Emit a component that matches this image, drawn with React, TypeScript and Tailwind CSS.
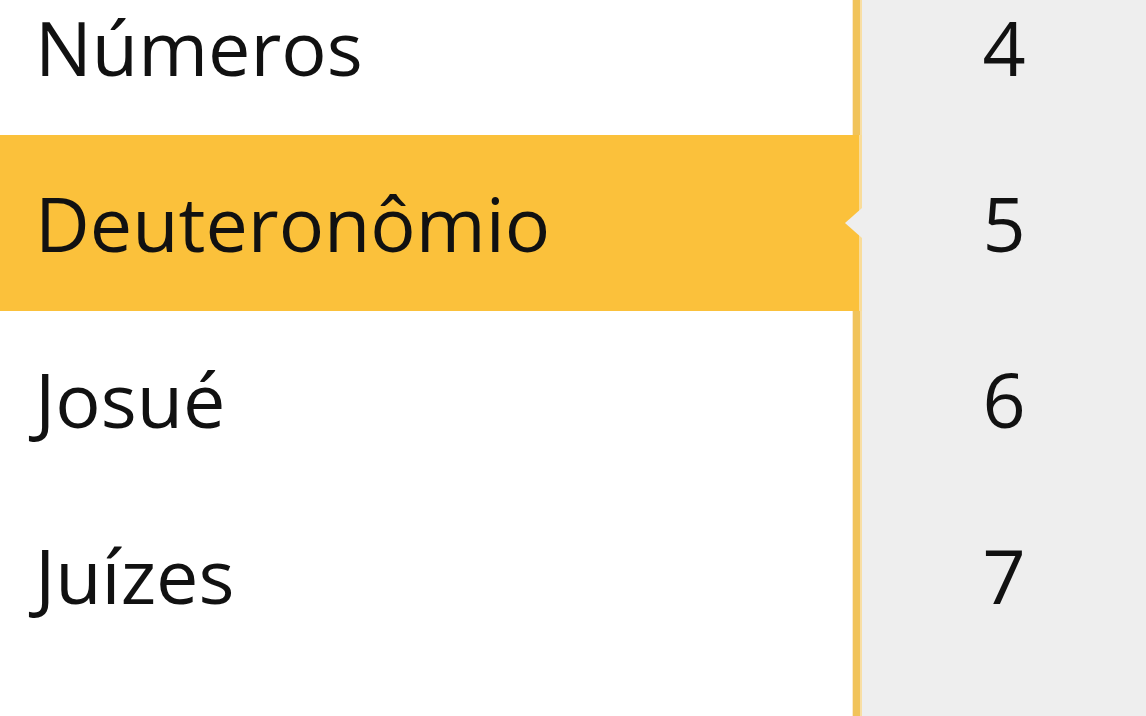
import React from "react";

const rows = [
  { name: "Levítico", n: "3" },
  { name: "Números", n: "4" },
  { name: "Deuteronômio", n: "5", selected: true },
  { name: "Josué", n: "6" },
  { name: "Juízes", n: "7" },
  { name: "Rute", n: "8" },
];

export default function App() {
  return (
    <div
      className="w-[1146px] h-[716px] overflow-hidden bg-white text-[#111111]"
      style={{ fontFamily: '"Open Sans", "Noto Sans", sans-serif' }}
    >
      <div className="flex flex-col -mt-[217px]">
        {rows.map((r) => (
          <div key={r.name} className="relative flex h-[176px]">
            <div
              className={
                r.selected
                  ? "w-[852px] flex items-center pl-[35px] bg-[#fbc13b]"
                  : "w-[852px] flex items-center pl-[35px] bg-white"
              }
            >
              <span className="text-[75.5px] leading-none whitespace-nowrap">{r.name}</span>
            </div>
            {r.selected ? (
              <div className="flex w-[10px]">
                <div className="w-[7px] bg-[#fbc13b]" />
                <div className="w-[3px] bg-[#f9dc9a]" />
              </div>
            ) : (
              <div className="flex w-[10px]">
                <div className="w-[1px] bg-[#fbeacb]" />
                <div className="w-[7px] bg-[#f1c35a]" />
                <div className="w-[2px] bg-[#f8dea4]" />
              </div>
            )}
            <div className="flex-1 flex items-center justify-center bg-[#eeeeee]">
              <span className="text-[75.5px] leading-none">{r.n}</span>
            </div>
            {r.selected && (
              <div className="absolute left-[845px] top-[73px] w-0 h-0 border-y-[15px] border-y-transparent border-r-[17px] border-r-[#eeeeee]" />
            )}
          </div>
        ))}
      </div>
    </div>
  );
}
